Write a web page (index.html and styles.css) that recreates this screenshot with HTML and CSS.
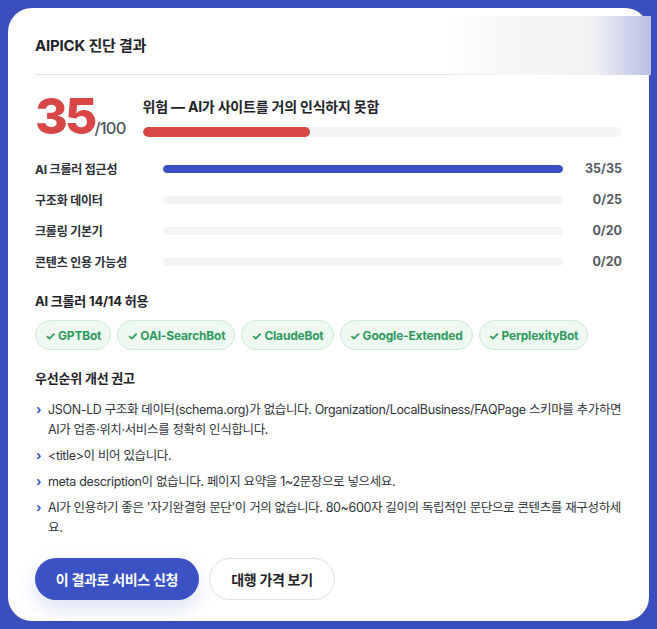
FILE: index.html
```html
<!DOCTYPE html>
<html lang="ko">
<head>
<meta charset="utf-8">
<link rel="stylesheet" href="styles.css">
</head>
<body>
<div class="card">
  <h1 class="title">AIPICK 진단 결과</h1>
  <div class="score">
    <div class="score-num"><span class="big">35</span><span class="den">/100</span></div>
    <div class="score-info">
      <div class="status">위험 — AI가 사이트를 거의 인식하지 못함</div>
      <div class="track track-lg"><div class="fill fill-red" style="width:35%"></div></div>
    </div>
  </div>
  <div class="rows">
    <div class="row"><span class="label">AI 크롤러 접근성</span><div class="track"><div class="fill fill-blue" style="width:100%"></div></div><span class="val">35/35</span></div>
    <div class="row"><span class="label">구조화 데이터</span><div class="track"></div><span class="val">0/25</span></div>
    <div class="row"><span class="label">크롤링 기본기</span><div class="track"></div><span class="val">0/20</span></div>
    <div class="row"><span class="label">콘텐츠 인용 가능성</span><div class="track"></div><span class="val">0/20</span></div>
  </div>
  <h2 class="sub">AI 크롤러 14/14 허용</h2>
  <div class="chips">
    <span class="chip">✓ GPTBot</span>
    <span class="chip">✓ OAI-SearchBot</span>
    <span class="chip">✓ ClaudeBot</span>
    <span class="chip">✓ Google-Extended</span>
    <span class="chip">✓ PerplexityBot</span>
  </div>
  <h2 class="sub sub2">우선순위 개선 권고</h2>
  <ul class="recs">
    <li>JSON-LD 구조화 데이터(schema.org)가 없습니다. Organization/LocalBusiness/FAQPage 스키마를 추가하면 AI가 업종·위치·서비스를 정확히 인식합니다.</li>
    <li>&lt;title&gt;이 비어 있습니다.</li>
    <li>meta description이 없습니다. 페이지 요약을 1~2문장으로 넣으세요.</li>
    <li>AI가 인용하기 좋은 '자기완결형 문단'이 거의 없습니다. 80~600자 길이의 독립적인 문단으로 콘텐츠를 재구성하세요.</li>
  </ul>
  <div class="actions">
    <button class="btn btn-primary">이 결과로 서비스 신청</button>
    <button class="btn btn-ghost">대행 가격 보기</button>
  </div>
  <div class="veil"></div>
</div>
</body>
</html>
```

FILE: styles.css
```css
html, body { margin: 0; padding: 0; }
body {
  background: #3a4fbd;
  padding: 8px;
  font-family: "Inter", "Noto Sans CJK KR", sans-serif;
  color: #1f2329;
}
.card {
  position: relative;
  box-sizing: border-box;
  width: 641px;
  height: 613px;
  background: #fff;
  border-radius: 24px;
  padding: 28px 27px 0 27px;
  overflow: visible;
}
.title {
  margin: 0;
  font-size: 15px;
  line-height: 20px;
  font-weight: 700;
  padding-bottom: 18px;
  border-bottom: 1px solid #e6e7ea;
  letter-spacing: -0.2px;
}
.score {
  display: flex;
  align-items: flex-start;
  gap: 17px;
  margin-top: 18px;
}
.score-num { display: flex; align-items: baseline; white-space: nowrap; }
.big {
  font-size: 50px;
  line-height: 46px;
  font-weight: 800;
  color: #d94646;
  letter-spacing: -3px;
}
.den {
  font-size: 16.5px;
  color: #4f5660;
  font-weight: 500;
  letter-spacing: -0.8px;
}
.score-info { flex: 1; padding-top: 4px; }
.status {
  font-size: 14px;
  line-height: 20px;
  font-weight: 700;
  letter-spacing: -0.2px;
}
.track {
  flex: 1;
  height: 8px;
  border-radius: 4px;
  background: #f3f4f5;
  overflow: hidden;
}
.track-lg { height: 10px; border-radius: 5px; margin-top: 10px; }
.fill { height: 100%; border-radius: inherit; }
.fill-red { background: #d94646; }
.fill-blue { background: #3a50c0; }
.rows { margin-top: 14px; display: flex; flex-direction: column; }
.row {
  display: flex;
  align-items: center;
  height: 31px;
}
.label {
  width: 128px;
  font-size: 12px;
  font-weight: 700;
  color: #2b3037;
  letter-spacing: -0.2px;
}
.val {
  width: 59px;
  text-align: right;
  font-size: 12.5px;
  font-weight: 700;
  color: #555b63;
}
.sub {
  margin: 15px 0 0;
  font-size: 13px;
  line-height: 18px;
  font-weight: 700;
  letter-spacing: -0.2px;
}
.chips {
  display: flex;
  gap: 6px;
  margin-top: 10px;
}
.chip {
  display: inline-flex;
  align-items: center;
  height: 28px;
  padding: 0 9px;
  border-radius: 15px;
  background: #edf9f1;
  border: 1px solid #cdebd8;
  color: #2e9a5c;
  font-size: 12px;
  font-weight: 700;
  letter-spacing: -0.2px;
}
.sub2 { margin-top: 19px; }
.recs {
  list-style: none;
  margin: 13px 0 0;
  padding: 0;
}
.recs li {
  position: relative;
  padding-left: 13px;
  font-size: 12.5px;
  line-height: 20px;
  color: #2f343b;
  margin-bottom: 6px;
  letter-spacing: -0.35px;
}
.recs li::before {
  content: "›";
  position: absolute;
  left: 1px;
  top: 0;
  color: #3a4fbd;
  font-weight: 700;
}
.actions {
  display: flex;
  gap: 10px;
  margin-top: 20px;
}
.btn {
  height: 42px;
  border-radius: 21px;
  font-family: inherit;
  font-size: 14px;
  font-weight: 700;
  letter-spacing: -0.3px;
  cursor: pointer;
}
.btn-primary {
  width: 164px;
  background: #3a52c4;
  color: #fff;
  border: none;
  box-shadow: 0 8px 20px rgba(58, 82, 196, 0.18);
}
.btn-ghost {
  width: 126px;
  background: #fff;
  color: #1f2329;
  border: 1px solid #dfe1e5;
}
.veil {
  position: absolute;
  left: 437px;
  top: 8px;
  width: 206px;
  height: 59px;
  background: linear-gradient(to right, rgba(255,255,255,0) 0%, #f5f6f7 28%, #f1f2f4 72%, #b7bfe1 100%);
}
```
